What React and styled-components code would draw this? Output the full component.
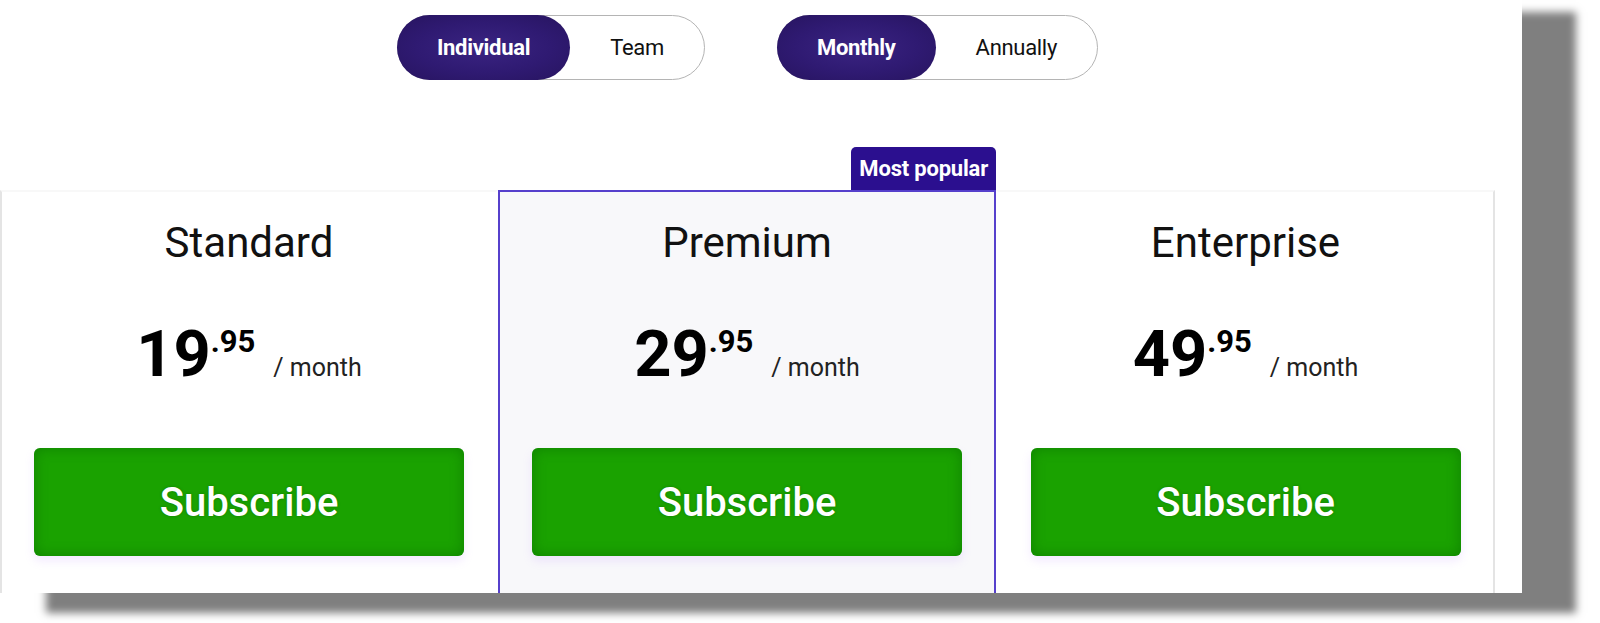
import React from "react";
import styled, { createGlobalStyle } from "styled-components";

const GlobalStyle = createGlobalStyle`
  html, body {
    margin: 0;
    padding: 0;
    background: #ffffff;
    min-height: 623px;
  }
  body {
    font-family: Roboto, "Liberation Sans", Arial, sans-serif;
    color: #111;
  }
`;

const Frame = styled.div`
  width: 1522px;
  height: 593px;
  background: #ffffff;
  box-shadow: 50px 16px 8px 4px rgba(0, 0, 0, 0.5);
  overflow: hidden;
`;

const Content = styled.div`
  width: 1495px;
  height: 100%;
  display: flex;
  flex-direction: column;
`;

const ToggleRow = styled.div`
  display: flex;
  justify-content: center;
  gap: 72px;
  padding-top: 15px;
`;

const Toggle = styled.div`
  display: inline-flex;
  height: 63px;
  border: 1px solid #b4b4b4;
  border-radius: 40px;
  background: #fff;
`;

const Segment = styled.button`
  display: flex;
  align-items: center;
  justify-content: center;
  height: ${(p) => (p.active ? "65px" : "63px")};
  margin: ${(p) => (p.active ? "-1px 0 -1px -1px" : "0")};
  padding: 0 40px;
  border: none;
  border-radius: 40px;
  font-family: Roboto, "Liberation Sans", Arial, sans-serif;
  font-size: 22px;
  letter-spacing: -0.3px;
  font-weight: ${(p) => (p.active ? 700 : 400)};
  color: ${(p) => (p.active ? "#fff" : "#111")};
  background: ${(p) =>
    p.active
      ? "radial-gradient(ellipse at center, #3a2482 0%, #2f1a72 55%, #27145f 100%)"
      : "transparent"};
  cursor: pointer;
`;

const Cards = styled.div`
  flex: 1;
  display: grid;
  grid-template-columns: 498px 498px 499px;
  margin-top: 110px;
`;

const Card = styled.div`
  position: relative;
  box-sizing: border-box;
  display: flex;
  flex-direction: column;
  align-items: center;
  padding-top: 27px;
  background: ${(p) => (p.featured ? "#f8f8fa" : "#fff")};
  border: 2px solid ${(p) => (p.featured ? "#5640cc" : "transparent")};
  border-top-color: ${(p) => (p.featured ? "#5640cc" : "#f8f8f8")};
  border-left-color: ${(p) =>
    p.featured ? "#5640cc" : p.edge === "left" ? "#e4e4e4" : "transparent"};
  border-right-color: ${(p) =>
    p.featured ? "#5640cc" : p.edge === "right" ? "#e4e4e4" : "transparent"};
  border-bottom: none;
`;

const Badge = styled.div`
  position: absolute;
  top: -45px;
  right: -2px;
  height: 43px;
  display: flex;
  align-items: center;
  padding: 0 8px;
  background: #2b0f8f;
  border-radius: 5px 5px 0 0;
  color: #fff;
  font-size: 22px;
  font-weight: 700;
  letter-spacing: -0.2px;
`;

const Title = styled.h2`
  margin: 0;
  font-size: 42px;
  line-height: 48px;
  font-weight: 400;
  color: #111;
`;

const Price = styled.div`
  margin-top: 55px;
  height: 64px;
  line-height: 64px;
  white-space: nowrap;
  text-align: center;
`;

const Amount = styled.span`
  font-size: 65px;
  line-height: 1;
  font-weight: 700;
  color: #000;
`;

const Cents = styled.span`
  font-size: 31px;
  line-height: 1;
  font-weight: 700;
  color: #000;
  vertical-align: 24px;
`;

const Period = styled.span`
  margin-left: 18px;
  font-size: 25px;
  line-height: 1;
  color: #222;
`;

const Subscribe = styled.button`
  margin-top: 62px;
  width: 430px;
  height: 108px;
  border: none;
  border-radius: 6px;
  background: #1aa200;
  box-shadow: inset 0 0 14px rgba(0, 90, 0, 0.45),
    0 5px 10px rgba(190, 140, 255, 0.18);
  color: #fff;
  font-family: Roboto, "Liberation Sans", Arial, sans-serif;
  font-size: 40px;
  font-weight: 500;
  text-shadow: 0 0 3px rgba(0, 60, 0, 0.35);
  cursor: pointer;
`;

const plans = [
  { name: "Standard", amount: "19", cents: ".95", edge: "left" },
  { name: "Premium", amount: "29", cents: ".95", featured: true },
  { name: "Enterprise", amount: "49", cents: ".95", edge: "right" },
];

const App = () => {
  return (
    <>
      <GlobalStyle />
      <Frame>
        <Content>
          <ToggleRow>
            <Toggle>
              <Segment active>Individual</Segment>
              <Segment>Team</Segment>
            </Toggle>
            <Toggle>
              <Segment active>Monthly</Segment>
              <Segment>Annually</Segment>
            </Toggle>
          </ToggleRow>
          <Cards>
            {plans.map((plan) => (
              <Card key={plan.name} featured={plan.featured} edge={plan.edge}>
                {plan.featured && <Badge>Most popular</Badge>}
                <Title>{plan.name}</Title>
                <Price>
                  <Amount>{plan.amount}</Amount>
                  <Cents>{plan.cents}</Cents>
                  <Period>/ month</Period>
                </Price>
                <Subscribe>Subscribe</Subscribe>
              </Card>
            ))}
          </Cards>
        </Content>
      </Frame>
    </>
  );
};

export default App;
